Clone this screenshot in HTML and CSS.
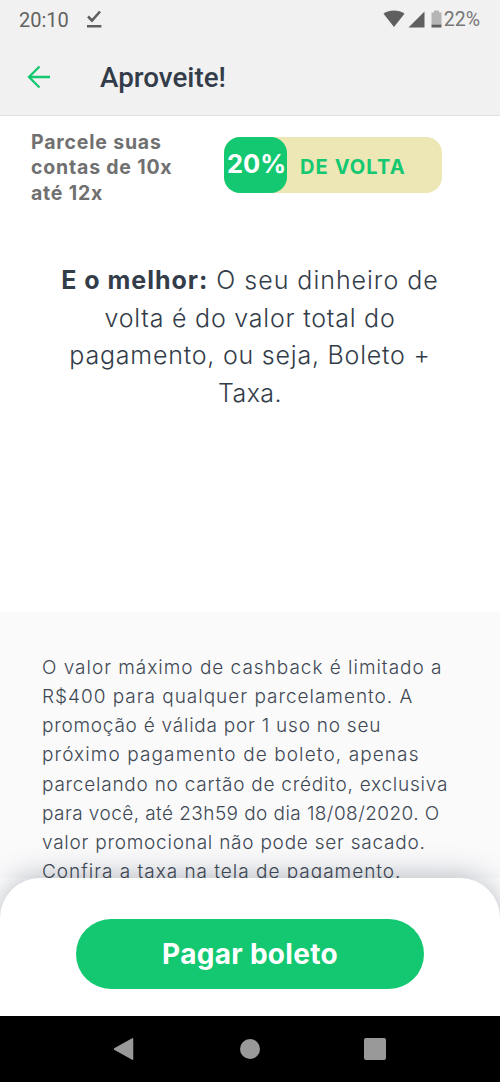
FILE: index.html
```html
<!DOCTYPE html>
<html lang="pt-BR">
<head>
    <meta charset="UTF-8">
    <title>Aproveite!</title>
    <meta name="viewport" content="width=device-width, initial-scale=1.0">
    <link rel="stylesheet" href="styles.css">
</head>
<body>
    <div class="header">
        <div class="status-bar">
            <span class="time">20:10</span>
            <svg class="download-icon" width="16" height="18" viewBox="0 0 16 18">
                <path d="M2 6.500L6 10.500L14 1.500" fill="none" stroke="#5f5f5f" stroke-width="2.6"/>
                <path d="M1 15H15.4V17.500H1z" fill="#5f5f5f"/>
            </svg>
            <div class="status-right">
                <svg width="59" height="18" viewBox="0 0 59 18">
                    <path d="M0.5 3.8C6.5-0.5 15.5-0.5 21.5 3.8L11 17z" fill="#5f5f5f"/>
                    <path d="M41.5 1.5V17.5H25.5z" fill="#5f5f5f"/>
                    <path d="M48.500 2.500H51V0.500H56V2.500H58.500V14.500H48.500z" fill="#b5b5b5"/>
                    <path d="M48.500 14.500H58.500V17.500H48.500z" fill="#5f5f5f"/>
                </svg>
                <span class="battery">22%</span>
            </div>
        </div>
        <div class="title-bar">
            <svg width="24" height="24" viewBox="0 0 24 24">
                <path d="M23 12H2M12.500 1.500L2 12L12.500 22.500" fill="none" stroke="#13c871" stroke-width="2.3"/>
            </svg>
            <h1>Aproveite!</h1>
        </div>
    </div>

    <div class="content">
        <div class="offer">
            <p class="offer-text">Parcele suas<br>contas de 10x<br>até 12x</p>
            <div class="cashback">
                <span class="percent">20%</span>
                <span class="back">DE VOLTA</span>
            </div>
        </div>
        <p class="message">
            <span class="wide"><b>E o melhor:</b> O seu dinheiro de</span><br>
            volta é do valor total do<br>
            pagamento, ou seja, Boleto +<br>
            <span class="narrow">Taxa.</span>
        </p>
    </div>

    <div class="terms">
        <p>
            <span class="wide">O valor máximo de cashback é limitado a</span><br>
            <span class="wide">R$400 para qualquer parcelamento. A</span><br>
            promoção é válida por 1 uso no seu<br>
            <span class="wider">próximo pagamento de boleto, apenas</span><br>
            parcelando no cartão de crédito, exclusiva<br>
            <span class="narrow">para você, até 23h59 do dia 18/08/2020. O</span><br>
            valor promocional não pode ser sacado.<br>
            <span class="wide">Confira a taxa na tela de pagamento.</span>
        </p>
    </div>

    <div class="footer">
        <button class="pay-button">Pagar boleto</button>
    </div>

    <div class="nav">
        <svg width="22" height="24" viewBox="0 0 22 24">
            <path d="M1.500 12L19.500 1.800V22.200z" fill="#999" stroke="#999" stroke-width="1.500" stroke-linejoin="round"/>
        </svg>
        <span class="home"></span>
        <span class="recent"></span>
    </div>
</body>
</html>
```

FILE: styles.css
```css
* {
    box-sizing: border-box;
}
body {
    font-family: Inter, "Liberation Sans", sans-serif;
    margin: 0;
    height: 1082px;
    display: flex;
    flex-direction: column;
    overflow: hidden;
    background-color: #fff;
    color: #333c49;
}
h1, p {
    margin: 0;
}
.header {
    height: 116px;
    flex: none;
    background-color: #f1f1f1;
    border-bottom: 1px solid #dfdfe6;
    font-family: Roboto, sans-serif;
}
.status-bar {
    display: flex;
    align-items: center;
    height: 39px;
    padding: 0 20px 0 19px;
    color: #626262;
}
.time {
    width: 67px;
    font-size: 20px;
}
.download-icon {
    margin-top: -2px;
}
.status-right {
    display: flex;
    align-items: center;
    margin-left: auto;
}
.status-right svg {
    margin-top: -2px;
}
.battery {
    margin-left: 2px;
    font-size: 19.5px;
    color: #777;
}
.title-bar {
    display: flex;
    align-items: center;
    height: 75px;
    padding-left: 27px;
}
.title-bar h1 {
    margin: 1px 0 0 49px;
    font-size: 27.8px;
    font-weight: 500;
}
.content {
    height: 496px;
    flex: none;
}
.offer {
    display: flex;
    padding: 14px 0 0 31px;
    height: 130px;
}
.offer-text {
    width: 193px;
    font-size: 19.5px;
    font-weight: 700;
    line-height: 25.3px;
    letter-spacing: 0.8px;
    color: #707070;
}
.cashback {
    display: flex;
    width: 218px;
    height: 56px;
    margin-top: 7px;
    border-radius: 16px;
    background-color: #ede6b5;
    color: #13c871;
    font-weight: 700;
}
.percent {
    width: 63px;
    padding-left: 2px;
    border-radius: 16px;
    background-color: #13c871;
    color: #fff;
    font-size: 25.5px;
    line-height: 54px;
    text-align: center;
}
.back {
    margin-left: 13px;
    font-size: 20px;
    line-height: 61px;
    letter-spacing: 1.1px;
}
.message {
    margin-top: 16px;
    text-align: center;
    font-size: 25px;
    font-weight: 300;
    line-height: 37.5px;
    letter-spacing: 0.78px;
}
.message b {
    font-weight: 700;
}
.terms {
    height: 266px;
    flex: none;
    padding: 41px 0 0 42px;
    overflow: hidden;
    background-color: #fafafb;
    color: #404854;
    font-size: 19px;
    font-weight: 300;
    line-height: 29.15px;
    letter-spacing: 0.76px;
    white-space: nowrap;
}
/* line fitting */
.wide {
    letter-spacing: 0.98px;
}
.wider {
    letter-spacing: 1.1px;
}
.narrow {
    letter-spacing: 0.43px;
}
.footer {
    position: relative;
    height: 138px;
    flex: none;
    padding-top: 41px;
    border-radius: 40px 40px 0 0;
    background-color: #fff;
    box-shadow: 0 0 30px rgba(30, 40, 60, 0.35);
    text-align: center;
}
.pay-button {
    width: 348px;
    height: 70px;
    border: none;
    border-radius: 35px;
    background-color: #13c871;
    color: #fff;
    font-family: Inter, sans-serif;
    font-size: 28px;
    font-weight: 700;
    letter-spacing: 0.3px;
}
.nav {
    position: relative;
    display: flex;
    align-items: center;
    justify-content: space-between;
    flex: 1;
    padding: 0 114px 0 113px;
    background-color: #000;
}
.home {
    width: 20px;
    height: 20px;
    border-radius: 50%;
    background-color: #999;
}
.recent {
    width: 22px;
    height: 22px;
    border-radius: 2px;
    background-color: #999;
}
```
